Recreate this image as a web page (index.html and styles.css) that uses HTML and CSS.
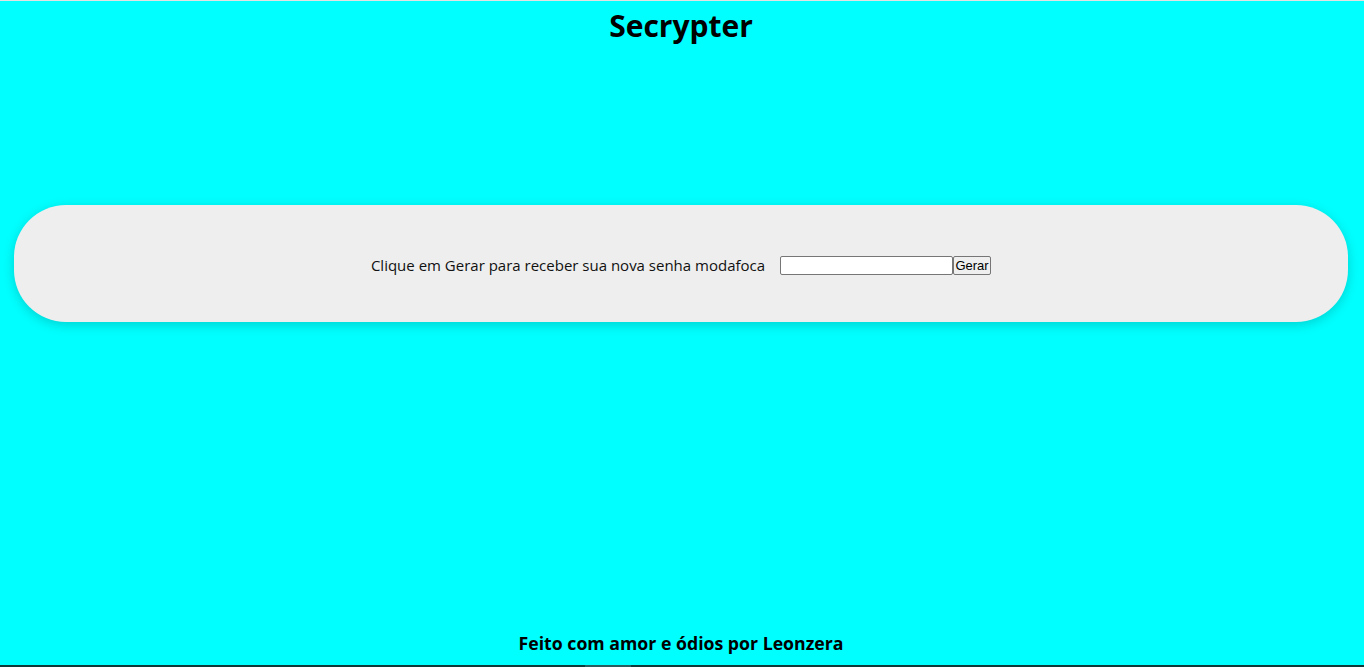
FILE: index.html
```html
<!DOCTYPE html>
<html lang="pt-BR">
<head>
<meta charset="utf-8">
<title>Secrypter</title>
<link rel="stylesheet" href="styles.css">
</head>
<body>
<div class="page">
  <h1 class="title">Secrypter</h1>
  <main class="main">
    <section class="panel">
      <span class="label">Clique em Gerar para receber sua nova senha modafoca</span>
      <input class="field" type="text">
      <button class="btn" type="button">Gerar</button>
    </section>
  </main>
  <footer class="footer">Feito com amor e ódios por Leonzera</footer>
</div>
<div class="bottombar"><span class="bar-seg"></span></div>
</body>
</html>
```

FILE: styles.css
```css
html, body {
  margin: 0;
  padding: 0;
  height: 100%;
}
body {
  background: #00ffff;
  font-family: "Open Sans", "Noto Sans", sans-serif;
  color: #000;
  display: flex;
  flex-direction: column;
  border-top: 1px solid #e2e2e2;
  box-sizing: border-box;
  overflow: hidden;
}
.page {
  flex: 1;
  display: flex;
  flex-direction: column;
  padding-right: 2px;
}
.title {
  margin: 0;
  text-align: center;
  font-size: 30px;
  font-weight: 700;
  line-height: 50px;
}
.main {
  flex: 1;
  padding-top: 154px;
}
.panel {
  margin: 0 14px;
  height: 117px;
  background: #eeeeee;
  border-radius: 52px;
  box-shadow: 0 3px 12px rgba(0, 0, 0, 0.18);
  display: flex;
  align-items: center;
  justify-content: center;
  padding-top: 3px;
  box-sizing: border-box;
}
.label {
  font-size: 15px;
  color: #111;
  margin-right: 15px;
}
.field {
  width: 173px;
  height: 19px;
  box-sizing: border-box;
  border: 1px solid #767676;
  border-radius: 2px;
  background: #fff;
  padding: 1px 2px;
  margin: 0;
  font-family: "Liberation Sans", Arial, sans-serif;
  font-size: 13px;
}
.btn {
  width: 38px;
  height: 19px;
  box-sizing: border-box;
  border: 1px solid #767676;
  border-radius: 2px;
  background: #efefef;
  padding: 0;
  margin: 0;
  font-family: "Liberation Sans", Arial, sans-serif;
  font-size: 13px;
  color: #000;
}
.footer {
  text-align: center;
  font-size: 17.7px;
  font-weight: 700;
  padding-bottom: 10px;
  line-height: 24px;
}
.bottombar {
  height: 2px;
  background: #0e3a3a;
  position: relative;
}
.bar-seg {
  position: absolute;
  left: 585px;
  width: 46px;
  top: 0;
  height: 2px;
  background: #2a5e5e;
}
```
